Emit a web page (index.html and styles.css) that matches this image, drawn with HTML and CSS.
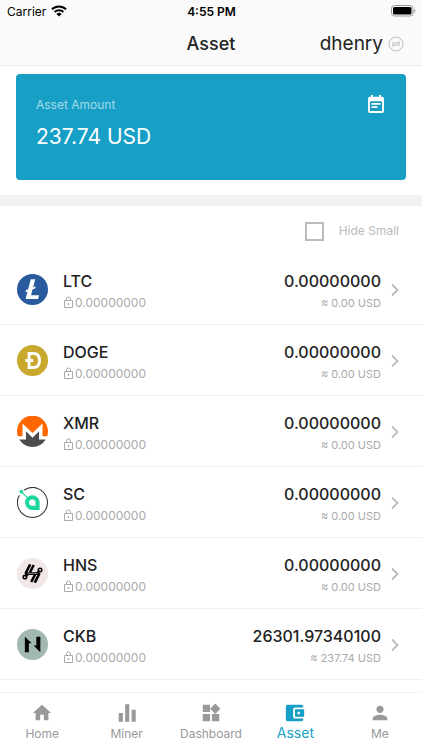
FILE: index.html
```html
<!DOCTYPE html>
<html lang="en">
<head>
<meta charset="UTF-8">
<meta name="viewport" content="width=device-width, initial-scale=1.0">
<title>Asset</title>
<link rel="stylesheet" href="styles.css">
</head>
<body>
<svg class="sprite" aria-hidden="true">
    <symbol id="lock" viewBox="0 0 11 13">
        <path d="M1.500 4.500h8v7h-8zM3.500 4.500V3a2 2 0 0 1 4 0v1.500" fill="none" stroke="currentColor" stroke-width="1"/>
        <circle cx="5.500" cy="8" r="0.900" fill="currentColor"/>
    </symbol>
    <symbol id="chevron" viewBox="0 0 8 14">
        <path d="M1 1.500L6.500 7L1 12.500" fill="none" stroke="currentColor" stroke-width="1.800"/>
    </symbol>
</svg>

<header class="top">
    <div class="status">
        <div class="carrier">
            <span>Carrier</span>
            <svg width="16" height="12" viewBox="0 0 16 12" fill="none" stroke="#000" stroke-width="2.100">
                <path d="M1 4.300a10 10 0 0 1 14 0"/>
                <path d="M3.600 7.100a6.300 6.300 0 0 1 8.800 0"/>
                <path d="M8 11.600L5.400 9a3.700 3.700 0 0 1 5.200 0z" fill="#000" stroke="none"/>
            </svg>
        </div>
        <span class="clock">4:55 PM</span>
        <svg class="battery" width="25" height="12" viewBox="0 0 25 12">
            <rect x="0.5" y="0.5" width="21.5" height="10.5" rx="3" fill="none" stroke="#999"/>
            <rect x="2" y="2" width="18.5" height="7.5" rx="1.5"/>
            <path d="M23.300 4v4c1.500-.6 1.500-3.400 0-4z" fill="#999"/>
        </svg>
    </div>
    <div class="title-bar">
        <h1>Asset</h1>
        <button class="account" type="button">
            <span>dhenry</span>
            <svg width="16" height="16" viewBox="0 0 16 16" fill="none" stroke="#bbb" stroke-width="1">
                <circle cx="8" cy="8" r="7"/>
                <path d="M4 7h8L9.800 5M12 9H4l2.200 2"/>
            </svg>
        </button>
    </div>
</header>

<main>
    <section class="summary">
        <div class="card">
            <div>
                <p class="card-label">Asset Amount</p>
                <p class="card-value">237.74 USD</p>
            </div>
            <button class="history" type="button" aria-label="History">
                <svg width="16" height="18" viewBox="0 0 16 18">
                    <path fill="#fff" fill-rule="evenodd" d="M3 0h2v1.800h6V0h2v1.800h1.200A1.800 1.800 0 0 1 16 3.600v12.600a1.800 1.800 0 0 1-1.800 1.800H1.800A1.800 1.800 0 0 1 0 16.200V3.600A1.800 1.800 0 0 1 1.800 1.800H3zM2 6.300V16h12V6.300zM3.500 8h9v1.800h-9zM3.500 11.200h6V13h-6z"/>
                </svg>
            </button>
        </div>
    </section>

    <div class="filter">
        <label><input type="checkbox"> <span>Hide Small</span></label>
    </div>

    <ul class="coins">
        <li>
            <a class="coin" href="#ltc">
                <svg class="logo" viewBox="0 0 30 30">
                    <circle cx="15" cy="15" r="15" fill="#2a5a9e"/>
                    <path d="M13.300 5.200h4.300l-2 7.700 2.500-1-.6 2.200-2.500 1-1.400 5.400h7.700l-.9 3.700H8.300l1.900-7.300-2 .8.600-2.200 2-.8z" fill="#fff"/>
                </svg>
                <span class="info">
                    <span class="name">LTC</span>
                    <span class="locked"><svg class="lock"><use href="#lock"/></svg>0.00000000</span>
                </span>
                <span class="amount">
                    <span class="balance">0.00000000</span>
                    <span class="usd">≈ 0.00 USD</span>
                </span>
                <svg class="chevron"><use href="#chevron"/></svg>
            </a>
        </li>
        <li>
            <a class="coin" href="#doge">
                <svg class="logo" viewBox="0 0 30 30">
                    <circle cx="15" cy="15" r="15" fill="#c9a82e"/>
                    <path d="M11.700 8.200h4.100c4 0 6 2.600 6 6.800s-2 6.800-6 6.800h-4.100zM8.200 15h7.500" fill="none" stroke="#fff" stroke-width="2.800"/>
                </svg>
                <span class="info">
                    <span class="name">DOGE</span>
                    <span class="locked"><svg class="lock"><use href="#lock"/></svg>0.00000000</span>
                </span>
                <span class="amount">
                    <span class="balance">0.00000000</span>
                    <span class="usd">≈ 0.00 USD</span>
                </span>
                <svg class="chevron"><use href="#chevron"/></svg>
            </a>
        </li>
        <li>
            <a class="coin" href="#xmr">
                <svg class="logo" viewBox="0 0 30 30">
                    <path d="M.8 19.500A15 15 0 1 1 29.200 19.500h-4.500V7.200L15 16.500 5.300 7.200v12.300z" fill="#ff6600"/>
                    <path d="M2.200 22.800h6.500v-8L15 21l6.300-6.200v8h6.500a15 15 0 0 1-25.600 0z" fill="#4c4c4c"/>
                </svg>
                <span class="info">
                    <span class="name">XMR</span>
                    <span class="locked"><svg class="lock"><use href="#lock"/></svg>0.00000000</span>
                </span>
                <span class="amount">
                    <span class="balance">0.00000000</span>
                    <span class="usd">≈ 0.00 USD</span>
                </span>
                <svg class="chevron"><use href="#chevron"/></svg>
            </a>
        </li>
        <li>
            <a class="coin" href="#sc">
                <svg class="logo" viewBox="0 0 30 30">
                    <path d="M6.500 3.200A14.500 14.500 0 1 1 2.300 7.900" fill="none" stroke="#333" stroke-width="1"/>
                    <path d="M14.800 10a5.100 5.100 0 1 0 0 10.200h5.100v-5.100a5.100 5.100 0 0 0-5.100-5.100z" fill="none" stroke="#1ed6a0" stroke-width="4"/>
                    <path d="M4.200 4.500l6 6" stroke="#1ed6a0" stroke-width="1.200"/>
                    <circle cx="4.200" cy="4.500" r="1.800" fill="#1ed6a0"/>
                </svg>
                <span class="info">
                    <span class="name">SC</span>
                    <span class="locked"><svg class="lock"><use href="#lock"/></svg>0.00000000</span>
                </span>
                <span class="amount">
                    <span class="balance">0.00000000</span>
                    <span class="usd">≈ 0.00 USD</span>
                </span>
                <svg class="chevron"><use href="#chevron"/></svg>
            </a>
        </li>
        <li>
            <a class="coin" href="#hns">
                <svg class="logo" viewBox="0 0 30 30">
                    <circle cx="15" cy="15" r="15" fill="#f1e7e7"/>
                    <g fill="none" stroke="#000">
                        <path d="M12.800 6.200L8.500 14.500M16.200 6.800l-3.600 7M17.200 23.800l4.300-8.300M13.800 23.200l3.600-7" stroke-width="2.500"/>
                        <path d="M7.500 14.800h11l3.500-2M22.500 15.400h-11l-3.500 2" stroke-width="2"/>
                        <circle cx="22.300" cy="11.700" r="1.700" stroke-width="1.500"/>
                        <circle cx="7.700" cy="18.500" r="1.700" stroke-width="1.500"/>
                    </g>
                    <path d="M10 15.100h10" stroke="#f1e7e7" stroke-width="0.500"/>
                </svg>
                <span class="info">
                    <span class="name">HNS</span>
                    <span class="locked"><svg class="lock"><use href="#lock"/></svg>0.00000000</span>
                </span>
                <span class="amount">
                    <span class="balance">0.00000000</span>
                    <span class="usd">≈ 0.00 USD</span>
                </span>
                <svg class="chevron"><use href="#chevron"/></svg>
            </a>
        </li>
        <li>
            <a class="coin" href="#ckb">
                <svg class="logo" viewBox="0 0 30 30">
                    <circle cx="15" cy="15" r="15" fill="#a2b9b1"/>
                    <path d="M7.600 7.500l6.600 6.200h-2.700v8.800H7.600zM22.600 22.500L16 16h2.700V7.500h3.900z"/>
                </svg>
                <span class="info">
                    <span class="name">CKB</span>
                    <span class="locked"><svg class="lock"><use href="#lock"/></svg>0.00000000</span>
                </span>
                <span class="amount">
                    <span class="balance">26301.97340100</span>
                    <span class="usd">≈ 237.74 USD</span>
                </span>
                <svg class="chevron"><use href="#chevron"/></svg>
            </a>
        </li>
    </ul>
</main>

<nav class="tabs">
    <a href="#home">
        <svg viewBox="0 0 24 24"><path d="M10 20v-6h4v6h5v-8h3L12 3 2 12h3v8z"/></svg>
        <span>Home</span>
    </a>
    <a href="#miner">
        <svg viewBox="0 0 24 24"><path d="M10 2.500h4.500v19H10zM3 12h4.500v9.500H3zM17 8.500h4.500v13H17z"/></svg>
        <span>Miner</span>
    </a>
    <a href="#dashboard">
        <svg viewBox="0 0 24 24"><path d="M13 13h8v8h-8zM3 21v-8h8v8zM3 3v8h8V3zM16.660 1.690L11 7.340 16.660 13l5.660-5.660z"/></svg>
        <span>Dashboard</span>
    </a>
    <a class="active" href="#asset">
        <svg viewBox="0 0 24 24"><path d="M21 18v1c0 1.100-.9 2-2 2H4c-1.110 0-2-.9-2-2V5c0-1.100.89-2 2-2h15c1.100 0 2 .9 2 2v1h-9c-1.110 0-2 .9-2 2v8c0 1.100.89 2 2 2h9zm-9-2h10V8H12v8zm4-2.500c-.83 0-1.500-.67-1.500-1.500s.67-1.500 1.500-1.500 1.500.67 1.500 1.500-.67 1.500-1.500 1.500z"/></svg>
        <span>Asset</span>
    </a>
    <a href="#me">
        <svg viewBox="0 0 24 24"><path d="M12 12c2.210 0 4-1.790 4-4s-1.790-4-4-4-4 1.790-4 4 1.790 4 4 4zm0 2c-2.670 0-8 1.340-8 4v2h16v-2c0-2.660-5.330-4-8-4z"/></svg>
        <span>Me</span>
    </a>
</nav>
</body>
</html>
```
FILE: styles.css
```css
* {
    box-sizing: border-box;
}
body {
    display: flex;
    flex-direction: column;
    min-height: 100vh;
    margin: 0;
    background-color: #fff;
    color: #222;
    font-family: Inter, "Liberation Sans", sans-serif;
}
h1, p, ul {
    margin: 0;
    padding: 0;
}
button {
    padding: 0;
    border: none;
    background: none;
    color: inherit;
    font: inherit;
    cursor: pointer;
}
a {
    color: inherit;
    text-decoration: none;
}
svg {
    display: block;
    flex-shrink: 0;
}
.sprite {
    position: absolute;
    width: 0;
    height: 0;
}

/* header */
.top {
    background-color: #fafafa;
    border-bottom: 1px solid #ececec;
}
.status, .title-bar {
    display: grid;
    grid-template-columns: 1fr auto 1fr;
    align-items: center;
}
.status {
    height: 22px;
    padding: 0 6px 0 7px;
    color: #000;
    font-size: 12px;
}
.carrier {
    display: flex;
    align-items: center;
    gap: 5px;
}
.clock {
    font-weight: 600;
}
.battery {
    justify-self: end;
}
.title-bar {
    height: 43px;
    padding: 0 18px;
}
h1 {
    grid-column: 2;
    font-size: 18px;
    font-weight: 500;
}
.account {
    display: flex;
    align-items: center;
    justify-self: end;
    gap: 5px;
    font-size: 19px;
    line-height: 22px;
}

/* total */
.summary {
    padding: 8px 16px 15px;
    border-bottom: 11px solid #f2f2f5;
}
.card {
    display: flex;
    justify-content: space-between;
    align-items: flex-start;
    height: 106px;
    padding: 21px 22px 0 20px;
    border-radius: 4px;
    background-color: #189fc6;
    color: #fff;
}
.card-label {
    margin-bottom: 8px;
    color: #a5dbea;
    font-size: 12px;
    line-height: 20px;
}
.card-value {
    font-size: 21px;
    line-height: 28px;
}

/* filter */
.filter {
    display: flex;
    justify-content: flex-end;
    padding: 15px 23px 13px 0;
}
.filter label {
    display: flex;
    align-items: center;
    gap: 15px;
    color: #bbb;
    font-size: 12px;
    line-height: 20px;
}
.filter input {
    appearance: none;
    width: 19px;
    height: 19px;
    margin: 0;
    border: 2px solid #bbb;
}
.filter input:checked {
    background-color: #189fc6;
}

/* coin list */
.coins {
    list-style: none;
}
.coin {
    display: flex;
    align-items: center;
    height: 71px;
    padding: 1px 23px 0 17px;
    border-bottom: 1px solid #efefef;
}
.logo {
    width: 31px;
    height: 31px;
    margin-right: 15px;
}
.info, .amount {
    display: flex;
    flex-direction: column;
    gap: 2px;
    padding-top: 4px;
    line-height: 20px;
}
.amount {
    align-items: flex-end;
    margin-left: auto;
}
.name, .balance {
    font-size: 16px;
    font-weight: 500;
}
.locked {
    display: flex;
    align-items: center;
    gap: 1px;
    color: #aaa;
    font-size: 12px;
}
.lock {
    width: 11px;
    height: 13px;
}
.usd {
    color: #aaa;
    font-size: 11px;
}
.chevron {
    width: 8px;
    height: 14px;
    margin-left: 10px;
    color: #bbb;
}

/* bottom tabs */
.tabs {
    display: grid;
    grid-template-columns: repeat(5, 1fr);
    position: sticky;
    bottom: 0;
    height: 58px;
    margin-top: auto;
    border-top: 1px solid #f2f2f2;
    background-color: #fff;
    color: #999;
    font-size: 12px;
}
.tabs a {
    display: flex;
    flex-direction: column;
    align-items: center;
    padding-top: 9px;
    line-height: 20px;
}
.tabs svg {
    width: 22px;
    height: 22px;
    fill: currentColor;
}
.tabs .active {
    color: #189fc6;
    font-size: 14px;
    line-height: 18px;
}
```
